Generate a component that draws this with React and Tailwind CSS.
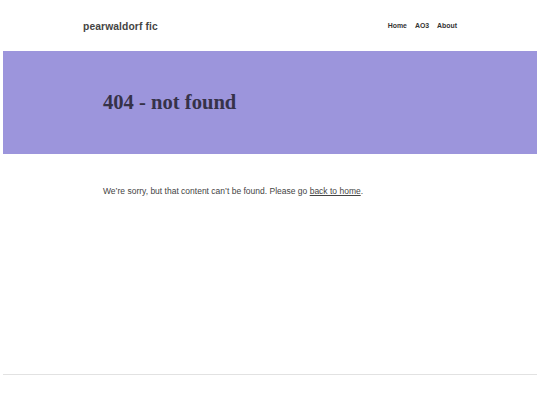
export default function App() {
  return (
    <div className="min-h-[405px] bg-white font-['Liberation_Sans',Arial,sans-serif] text-[#333]">
      <header className="h-[51px] flex items-center justify-between pl-[83px] pr-[83px] pt-[2px]">
        <a className="text-[10.3px] font-bold text-[#444] tracking-[0.01em]">pearwaldorf fic</a>
        <nav className="flex gap-[8px] text-[6.9px] font-bold text-[#333]">
          <a>Home</a>
          <a>AO3</a>
          <a>About</a>
        </nav>
      </header>
      <div className="mx-[3px] h-[103px] bg-[#9c95dc] flex items-center pl-[100px]">
        <h1 className="font-['Liberation_Serif','Times_New_Roman',serif] font-bold text-[20.6px] text-[#363249]">
          404 - not found
        </h1>
      </div>
      <main className="pl-[103px] pt-[31px] h-[220px]">
        <p className="text-[8.5px] text-[#444]">
          We’re sorry, but that content can’t be found. Please go{" "}
          <a className="underline">back to home</a>.
        </p>
      </main>
      <div className="mx-[3px] border-t border-[#e2e2e2]" />
    </div>
  );
}
